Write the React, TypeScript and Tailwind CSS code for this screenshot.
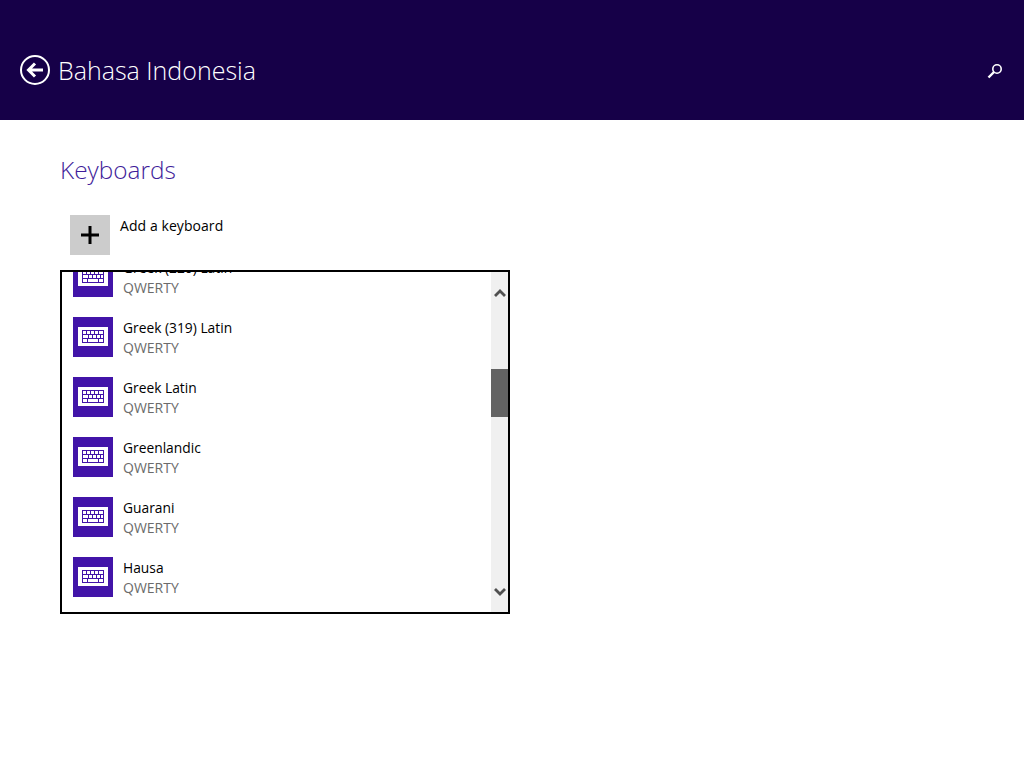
import React from 'react';

const keyboards = ['Greek (220) Latin', 'Greek (319) Latin', 'Greek Latin', 'Greenlandic', 'Guarani', 'Hausa'];

const KeyboardIcon = () => (
    <div className="w-10 h-10 shrink-0 bg-[#4214a8] flex items-center justify-center">
        <svg className="-mt-[2px]" width="30" height="19" viewBox="0 0 30 19" shapeRendering="crispEdges">
            <rect x="0" y="0" width="30" height="19" fill="#ffffff" />
            <rect x="4.5" y="3.5" width="21" height="12" fill="#ffffff" stroke="#4214a8" />
            <path d="M5 7.5H25M5 11.5H25M8.5 4V7M12.5 4V7M16.5 4V7M20.5 4V7M10.5 8V11M14.5 8V11M18.5 8V11M22.5 8V11M9.5 12V15M20.5 12V15" stroke="#4214a8" fill="none" />
        </svg>
    </div>
);

const App: React.FC = () => {
    return (
        <div className="w-[1024px] h-[768px] bg-white overflow-hidden font-['Open_Sans',sans-serif]">
            <header className="h-[120px] bg-[#160048] flex items-start justify-between pt-[52px] pl-5 pr-[21px]">
                <div className="flex items-center gap-2">
                    <svg width="30" height="30" viewBox="0 0 30 30" fill="none" stroke="#ffffff">
                        <circle cx="15" cy="15" r="14" strokeWidth="2" />
                        <path d="M23 15H9M15 8.5L8.5 15L15 21.5" strokeWidth="3" />
                    </svg>
                    <h1 className="text-[25px] leading-[36px] font-light text-white">Bahasa Indonesia</h1>
                </div>
                <svg className="mt-[11px]" width="16" height="16" viewBox="0 0 16 16" fill="none" stroke="#ffffff">
                    <circle cx="10" cy="6" r="4.2" strokeWidth="1.6" />
                    <path d="M7 9L1.5 14.5" strokeWidth="2.4" />
                </svg>
            </header>

            <main className="pl-[60px] pt-[32px]">
                <h2 className="text-[24.4px] leading-[36px] font-light text-[#3f1d9a]">Keyboards</h2>

                <div className="flex ml-[10px] mt-[27px] gap-[10px]">
                    <div className="w-10 h-10 bg-[#cccccc] flex items-center justify-center">
                        <svg width="20" height="20" viewBox="0 0 20 20" stroke="#000000" strokeWidth="3">
                            <path d="M10 1V19M1 10H19" />
                        </svg>
                    </div>
                    <div className="text-sm leading-[20px] mt-[1px] text-black tracking-[0.07px]">Add a keyboard</div>
                </div>

                <div className="mt-[15px] w-[450px] h-[344px] border-2 border-black flex overflow-hidden">
                    <div className="flex-1 overflow-hidden">
                        <ul className="mt-[-15px] pl-[11px]">
                            {keyboards.map(name => (
                                <li key={name} className="h-[60px] flex items-start gap-[10px]">
                                    <KeyboardIcon />
                                    <div className="mt-[1px]">
                                        <div className="text-[13.8px] leading-[20px] text-black">{name}</div>
                                        <div className="text-sm leading-[20px] text-[#6b6b6b]">QWERTY</div>
                                    </div>
                                </li>
                            ))}
                        </ul>
                    </div>
                    <div className="w-[17px] bg-[#f0f0f0] flex flex-col items-center justify-between relative pt-[17px] pb-[16px]">
                        <svg width="12" height="8" viewBox="0 0 12 8" fill="none" stroke="#505050" strokeWidth="2.8">
                            <path d="M1 7L6 2L11 7" />
                        </svg>
                        <svg width="12" height="8" viewBox="0 0 12 8" fill="none" stroke="#505050" strokeWidth="2.8">
                            <path d="M1 1L6 6L11 1" />
                        </svg>
                        <div className="absolute left-0 top-[97px] w-[17px] h-[48px] bg-[#636363]"></div>
                    </div>
                </div>
            </main>
        </div>
    );
};

export default App;
